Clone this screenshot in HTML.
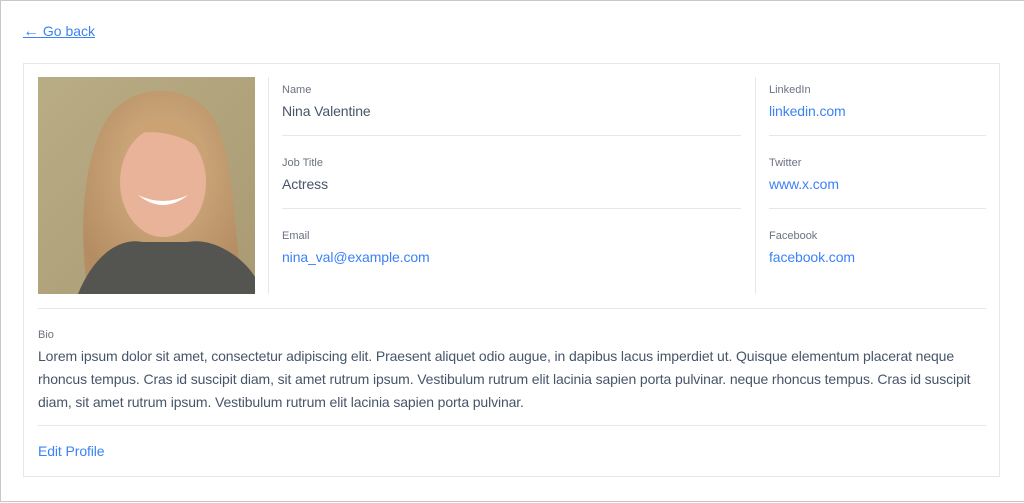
<!DOCTYPE html>
<html><head><style>
*{margin:0;padding:0;box-sizing:border-box}
body{width:1024px;height:503px;background:#fff;font-family:"Liberation Sans",sans-serif;position:relative;overflow:hidden}
.frame{position:absolute;left:0;top:0;width:1024px;height:502px;border:1px solid #c8c8c8;border-right:none}
.back{position:absolute;left:23px;top:23px;font-size:14px;color:#3b82f6;text-decoration:underline}
.card{position:absolute;left:23px;top:63px;width:977px;height:414px;border:1px solid #e5e7eb}
.photo{position:absolute;left:14px;top:13px;width:217px;height:217px;overflow:hidden}
.vline{position:absolute;top:13px;width:1px;height:217px;background:#e5e7eb}
.lbl{position:absolute;font-size:11px;color:#6b7280}
.val{position:absolute;font-size:14px;color:#475569;letter-spacing:-0.1px}
.lnk{color:#3b82f6}
.hl{position:absolute;height:1px;background:#e5e7eb}
.bio{position:absolute;left:14px;top:281px;width:955px;font-size:14px;line-height:23px;color:#475569;letter-spacing:-0.12px}
</style></head><body>
<div class="frame"></div>
<a class="back"><span style="font-size:16px">←</span> Go back</a>
<div class="card">
<div class="photo"><svg width="217" height="217" viewBox="0 0 217 217">
<defs><linearGradient id="bg" x1="0" y1="0" x2="1" y2="1"><stop offset="0" stop-color="#b9ad86"/><stop offset="1" stop-color="#a99a72"/></linearGradient>
<radialGradient id="hair" cx=".5" cy=".4" r=".6"><stop offset="0" stop-color="#d9b487"/><stop offset="1" stop-color="#b48e62"/></radialGradient></defs>
<rect width="217" height="217" fill="url(#bg)"/>
<path d="M50 217 C40 150 45 80 70 40 C95 5 150 5 175 40 C195 75 195 140 205 217 Z" fill="url(#hair)"/>
<ellipse cx="125" cy="105" rx="43" ry="55" fill="#e9b39a"/>
<path d="M100 118 Q125 138 150 118 Q125 130 100 118Z" fill="#fff"/>
<path d="M40 217 C55 180 80 160 105 165 L150 165 C175 160 205 180 217 200 L217 217 Z" fill="#545450"/>
<path d="M85 60 C100 30 160 30 170 80 C150 55 110 50 85 60Z" fill="#caa274"/>
</svg></div>
<div class="vline" style="left:244px"></div>
<div class="vline" style="left:731px"></div>
<div class="lbl" style="left:258px;top:20px">Name</div>
<div class="val" style="left:258px;top:39px">Nina Valentine</div>
<div class="hl" style="left:258px;width:459px;top:71px"></div>
<div class="lbl" style="left:258px;top:93px">Job Title</div>
<div class="val" style="left:258px;top:112px">Actress</div>
<div class="hl" style="left:258px;width:459px;top:144px"></div>
<div class="lbl" style="left:258px;top:166px">Email</div>
<div class="val lnk" style="left:258px;top:185px">nina_val@example.com</div>
<div class="lbl" style="left:745px;top:20px">LinkedIn</div>
<div class="val lnk" style="left:745px;top:39px">linkedin.com</div>
<div class="hl" style="left:745px;width:217px;top:71px"></div>
<div class="lbl" style="left:745px;top:93px">Twitter</div>
<div class="val lnk" style="left:745px;top:112px">www.x.com</div>
<div class="hl" style="left:745px;width:217px;top:144px"></div>
<div class="lbl" style="left:745px;top:166px">Facebook</div>
<div class="val lnk" style="left:745px;top:185px">facebook.com</div>
<div class="hl" style="left:14px;width:948px;top:244px"></div>
<div class="lbl" style="left:14px;top:265px">Bio</div>
<div class="bio">Lorem ipsum dolor sit amet, consectetur adipiscing elit. Praesent aliquet odio augue, in dapibus lacus imperdiet ut. Quisque elementum placerat neque rhoncus tempus. Cras id suscipit diam, sit amet rutrum ipsum. Vestibulum rutrum elit lacinia sapien porta pulvinar. neque rhoncus tempus. Cras id suscipit diam, sit amet rutrum ipsum. Vestibulum rutrum elit lacinia sapien porta pulvinar.</div>
<div class="hl" style="left:14px;width:948px;top:361px"></div>
<div class="val lnk" style="left:14px;top:379px">Edit Profile</div>
</div>
</body></html>
